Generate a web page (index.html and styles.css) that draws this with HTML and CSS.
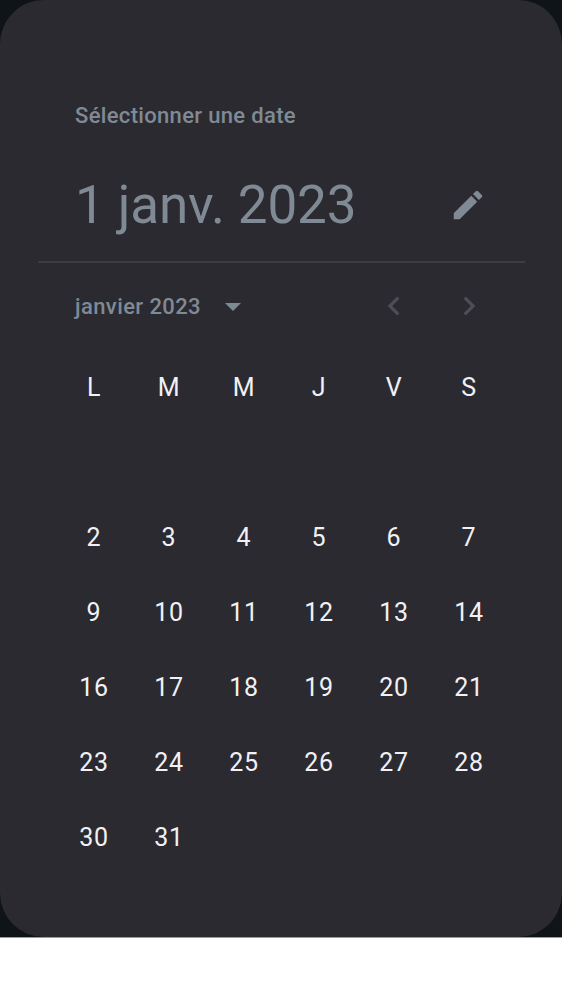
FILE: index.html
```html
<!DOCTYPE html>
<html lang="fr">
<head>
<meta charset="utf-8">
<title>Sélectionner une date</title>
<link rel="stylesheet" href="styles.css">
</head>
<body>
<div class="backdrop">
<main class="dialog">
<p class="label">Sélectionner une date</p>
<div class="headline">
<h1>1 janv. 2023</h1>
<svg class="edit" viewBox="0 0 24 24"><path d="M3 17.25V21h3.75L17.81 9.94l-3.75-3.75L3 17.25zM20.71 7.04a1 1 0 0 0 0-1.41l-2.34-2.34a1 1 0 0 0-1.41 0l-1.83 1.83 3.75 3.75 1.83-1.83z"/></svg>
</div>
<hr class="divider">
<div class="nav">
<span class="month">janvier 2023</span>
<svg class="caret" viewBox="0 0 16 8"><path d="M0 0h16L8 8z"/></svg>
<svg class="arrow prev" viewBox="0 0 24 24"><path d="M15.41 7.41 14 6l-6 6 6 6 1.41-1.41L10.83 12z"/></svg>
<svg class="arrow" viewBox="0 0 24 24"><path d="M10 6 8.59 7.41 13.17 12l-4.58 4.59L10 18l6-6z"/></svg>
</div>
<div class="grid">
<span>L</span><span>M</span><span>M</span><span>J</span><span>V</span><span>S</span>
<span></span><span></span><span></span><span></span><span></span><span></span>
<span>2</span><span>3</span><span>4</span><span>5</span><span>6</span><span>7</span>
<span>9</span><span>10</span><span>11</span><span>12</span><span>13</span><span>14</span>
<span>16</span><span>17</span><span>18</span><span>19</span><span>20</span><span>21</span>
<span>23</span><span>24</span><span>25</span><span>26</span><span>27</span><span>28</span>
<span>30</span><span>31</span>
</div>
</main>
</div>
</body>
</html>
```
FILE: styles.css
```css
body {
  margin: 0;
  background: #fff;
  font-family: Roboto, sans-serif;
}
.backdrop {
  background: #0f1418;
  border-bottom: 1px solid #9b999d;
}
.dialog {
  box-sizing: border-box;
  height: 937px;
  padding: 100px 37px 0 38px;
  border-radius: 44px;
  background: #2b2a30;
  color: #808a95;
}
.label {
  margin: 0 0 0 37px;
  font-size: 22px;
  font-weight: 500;
  line-height: 31px;
  letter-spacing: 0.33px;
}
.headline {
  display: flex;
  align-items: center;
  justify-content: space-between;
  height: 80px;
  margin: 34px 38px 0 37px;
}
h1 {
  margin: 0;
  font-size: 53px;
  font-weight: 400;
  line-height: 80px;
  letter-spacing: -0.12px;
}
.edit {
  width: 38px;
  height: 38px;
  fill: currentColor;
}
.divider {
  height: 2px;
  margin: 16px 0 0;
  border: 0;
  background: #3e3d43;
}
.nav {
  display: flex;
  align-items: center;
  height: 87px;
  padding: 0 37px;
}
.month {
  font-size: 22px;
  font-weight: 500;
  letter-spacing: 0.4px;
}
.caret {
  width: 16px;
  height: 8px;
  margin-left: 24px;
  fill: currentColor;
}
.arrow {
  width: 38px;
  height: 38px;
  margin-bottom: 1px;
  fill: #4b4e57;
}
.prev {
  margin: 0 37px 1px auto;
}
.grid {
  display: grid;
  grid-template-columns: repeat(6, 75px);
  grid-auto-rows: 75px;
  margin-left: 18.4px;
  color: #f1f1f5;
  font-size: 25px;
  line-height: 75px;
  text-align: center;
  letter-spacing: 0.5px;
}
```
